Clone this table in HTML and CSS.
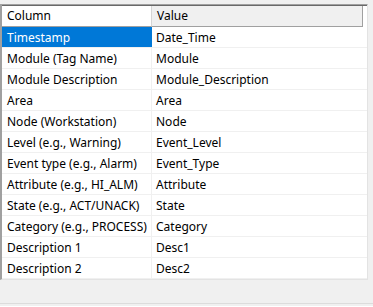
FILE: index.html
```html
<!DOCTYPE html>
<html>
<head>
<meta charset="utf-8">
<link rel="stylesheet" href="styles.css">
</head>
<body>
<div class="page">
  <div class="grid">
    <div class="header">
      <div class="hcell hcol">Column</div>
      <div class="hcell hval">Value</div>
    </div>
    <div class="row selected"><div class="c1">Timestamp</div><div class="c2">Date_Time</div></div>
    <div class="row"><div class="c1">Module (Tag Name)</div><div class="c2">Module</div></div>
    <div class="row"><div class="c1">Module Description</div><div class="c2">Module_Description</div></div>
    <div class="row"><div class="c1">Area</div><div class="c2">Area</div></div>
    <div class="row"><div class="c1">Node (Workstation)</div><div class="c2">Node</div></div>
    <div class="row"><div class="c1">Level (e.g., Warning)</div><div class="c2">Event_Level</div></div>
    <div class="row"><div class="c1">Event type (e.g., Alarm)</div><div class="c2">Event_Type</div></div>
    <div class="row"><div class="c1">Attribute (e.g., HI_ALM)</div><div class="c2">Attribute</div></div>
    <div class="row"><div class="c1">State (e.g., ACT/UNACK)</div><div class="c2">State</div></div>
    <div class="row"><div class="c1">Category (e.g., PROCESS)</div><div class="c2">Category</div></div>
    <div class="row"><div class="c1">Description 1</div><div class="c2">Desc1</div></div>
    <div class="row"><div class="c1">Description 2</div><div class="c2">Desc2</div></div>
  </div>
  <div class="footer"></div>
</div>
</body>
</html>
```
FILE: styles.css
```css
html, body {
  margin: 0;
  padding: 0;
  background: #f0f0f0;
}
body {
  font-family: "Segoe UI", "Noto Sans", "Open Sans", sans-serif;
  font-size: 12px;
  color: #000;
}
.page {
  width: 373px;
  height: 307px;
  padding-top: 4px;
  box-sizing: border-box;
  display: flex;
  flex-direction: column;
}
.grid {
  width: 368px;
  box-sizing: border-box;
  border-top: 1px solid #a0a0a0;
  border-left: 2px solid #a0a0a0;
  border-right: 1px solid #e3e3e3;
  border-bottom: 1px solid #e3e3e3;
  background: #fff;
}
.header {
  display: flex;
  height: 22px;
  border-top: 1px solid #696969;
  box-sizing: border-box;
}
.hcell {
  box-sizing: border-box;
  padding-left: 5px;
  line-height: 20px;
  border-bottom: 1px solid #a0a0a0;
}
.hcol {
  width: 150px;
  background: #fff;
  border-right: 1px solid #d5d5d5;
}
.hval {
  width: 211px;
  background: #f0f0f0;
  border-right: 1px solid #a0a0a0;
}
.row {
  display: flex;
  height: 21px;
  box-sizing: border-box;
  border-bottom: 1px solid #f0f0f0;
}
.c1, .c2 {
  box-sizing: border-box;
  padding-top: 2px;
  line-height: 18px;
  white-space: nowrap;
}
.c1 {
  width: 150px;
  padding-left: 5px;
  border-right: 1px solid #f0f0f0;
}
.c2 {
  flex: 1;
  padding-left: 4px;
}
.selected .c1 {
  background: #0078d7;
  color: #fff;
  border-right-color: #0078d7;
}
.footer {
  margin-top: 23px;
  height: 2px;
  border-top: 1px solid #dcdcdc;
  border-bottom: 1px solid #ffffff;
}
```
